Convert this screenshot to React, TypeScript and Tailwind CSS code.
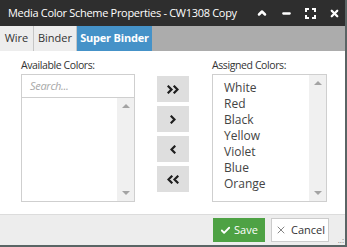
import { ChevronUp, Minus, X, Check } from "lucide-react";

const assigned = ["White", "Red", "Black", "Yellow", "Violet", "Blue", "Orange"];

function ListBox({ children, search }: { children?: React.ReactNode; search?: boolean }) {
  return (
    <div className="flex h-[128px] flex-col border border-[#cfcfcf] bg-white">
      {search && (
        <div className="flex h-[23px] shrink-0 items-center border-b border-[#cfcfcf] px-2 text-[11px] italic tracking-[-0.3px] text-[#a8a8a8]">
          Search...
        </div>
      )}
      <div className="flex min-h-0 flex-1">
        <div className="flex-1 overflow-hidden">{children}</div>
        <div className="flex w-[17px] flex-col items-center justify-between bg-[#f0f0f0] py-[6px]">
          <span className="h-0 w-0 border-x-[4px] border-b-[4px] border-x-transparent border-b-[#a3a3a3]" />
          <span className="h-0 w-0 border-x-[4px] border-t-[4px] border-x-transparent border-t-[#a3a3a3]" />
        </div>
      </div>
    </div>
  );
}

// chevron glyphs drawn as small svgs
function Arrow({ d, w }: { d: string; w: number }) {
  return (
    <svg width={w} height="9" viewBox={`0 0 ${w} 9`} fill="none" stroke="#1e1e1e" strokeWidth="2.2" strokeLinecap="square">
      <path d={d} />
    </svg>
  );
}

function MoveButton({ children }: { children: React.ReactNode }) {
  return (
    <button className="flex h-[26px] w-[32px] items-center justify-center bg-[#dedede]">
      {children}
    </button>
  );
}

export default function App() {
  return (
    <div className="h-[247px] w-[347px] bg-white font-['Open_Sans',sans-serif]">
      <div className="flex h-[247px] w-[347px] flex-col border-b-2 border-r-2 border-[#5a6565]">
        {/* Title bar */}
        <div className="flex h-[26px] shrink-0 items-center justify-between bg-[#2e2e2e] pl-2 pr-[5px] text-white">
          <span className="whitespace-nowrap text-[11px] tracking-[-0.3px]">Media Color Scheme Properties - CW1308 Copy</span>
          <div className="flex items-center gap-[13px]">
            <ChevronUp size={12} strokeWidth={5} />
            <Minus size={11} strokeWidth={5} />
            <svg width="11" height="11" viewBox="0 0 11 11" fill="none" stroke="white" strokeWidth="2">
              <path d="M1 4V1h3M7 1h3v3M10 7v3H7M4 10H1V7" />
            </svg>
            <X size={11} strokeWidth={5} />
          </div>
        </div>

        {/* Tabs */}
        <div className="flex h-[25px] shrink-0 bg-[#acacac] text-[11px]">
          <div className="flex w-[34px] items-center justify-center border-r border-[#c6c6c6] bg-[#ededed] text-[#333]">Wire</div>
          <div className="flex w-[43px] items-center justify-center border-r border-[#c6c6c6] bg-[#ededed] text-[#333]">Binder</div>
          <div className="flex w-[75px] items-center justify-center bg-[#4592c8] font-bold tracking-[-0.2px] text-white">Super Binder</div>
        </div>

        {/* Body */}
        <div className="flex flex-1 pl-[21px] pt-[7px]">
          <div className="w-[114px]">
            <div className="mb-[2px] h-[14px] text-[10.5px] leading-[14px] tracking-[-0.4px] text-[#333]">Available Colors:</div>
            <ListBox search />
          </div>
          <div className="ml-[22px] mt-[18px] flex flex-col gap-[4px]">
            <MoveButton>
              <Arrow w={12} d="M1.5 1.5l3 3-3 3M7.5 1.5l3 3-3 3" />
            </MoveButton>
            <MoveButton>
              <Arrow w={6} d="M1.5 1.5l3 3-3 3" />
            </MoveButton>
            <MoveButton>
              <Arrow w={6} d="M4.5 1.5l-3 3 3 3" />
            </MoveButton>
            <MoveButton>
              <Arrow w={12} d="M4.5 1.5l-3 3 3 3M10.5 1.5l-3 3 3 3" />
            </MoveButton>
          </div>
          <div className="ml-[23px] w-[115px]">
            <div className="mb-[2px] h-[14px] text-[10.5px] leading-[14px] tracking-[-0.4px] text-[#333]">Assigned Colors:</div>
            <ListBox>
              <ul className="pl-[11px] pt-[5px] text-[12px] leading-[16px] text-[#444]">
                {assigned.map((c) => (
                  <li key={c}>{c}</li>
                ))}
              </ul>
            </ListBox>
          </div>
        </div>

        {/* Footer */}
        <div className="relative flex h-[31px] shrink-0 items-center justify-end gap-[6px] border-t border-[#dcdcdc] bg-[#ededed] pr-[16px]">
          <button className="flex h-[24px] w-[52px] items-center justify-center gap-[3px] bg-[#4ea244] text-[11px] text-white">
            <Check size={11} strokeWidth={4} />
            Save
          </button>
          <button className="flex h-[24px] w-[58px] items-center justify-center gap-[4px] border border-[#cccccc] bg-white text-[11px] text-[#333]">
            <X size={12} strokeWidth={1.2} />
            Cancel
          </button>
          <span className="absolute bottom-[1px] right-[1px] text-[8px] leading-none text-[#777]">..:</span>
        </div>
      </div>
    </div>
  );
}
